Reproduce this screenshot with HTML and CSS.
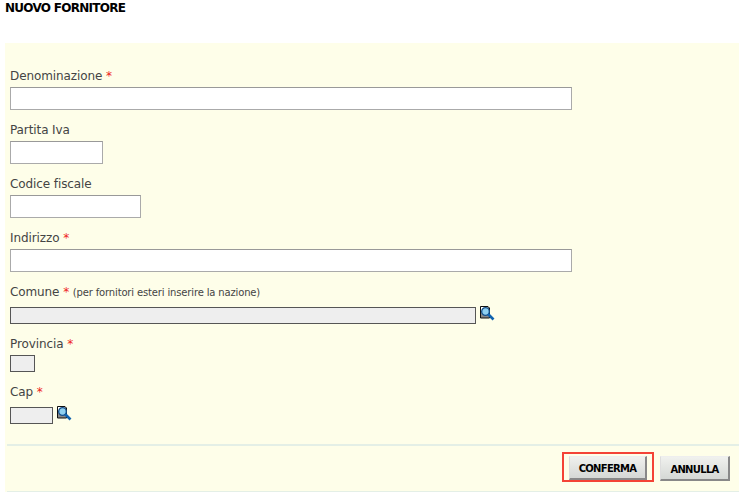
FILE: index.html
```html
<!DOCTYPE html>
<html lang="en">
<head>
    <meta charset="UTF-8">
    <title>Nuovo fornitore</title>
    <link rel="stylesheet" href="styles.css">
</head>
<body>
    <h1 class="title">NUOVO FORNITORE</h1>

    <form class="panel">
        <div class="fields">
            <div class="field">
                <label>Denominazione <span class="req">*</span></label>
                <input type="text" class="w-xl">
            </div>
            <div class="field">
                <label>Partita Iva</label>
                <input type="text" class="w-s">
            </div>
            <div class="field">
                <label>Codice fiscale</label>
                <input type="text" class="w-m">
            </div>
            <div class="field">
                <label>Indirizzo <span class="req">*</span></label>
                <input type="text" class="w-xl">
            </div>
            <div class="field">
                <label>Comune <span class="req">*</span> <small>(per fornitori esteri inserire la nazione)</small></label>
                <div class="lookup">
                    <input type="text" class="locked w-l" readonly>
                    <svg class="lens" width="16" height="15" viewBox="0 0 16 15">
                        <path d="M1.5 .5H9L10.5 2V12H1.5Z" fill="#888" stroke="#111"/>
                        <path d="M2 1H8.500V5H2Z" fill="#fff"/>
                        <circle cx="6.500" cy="5.500" r="3.800" fill="#8fd0f0" stroke="#14508c" stroke-width="1.300"/>
                        <path d="M9 8L14.500 13.500" stroke="#0f62ae" stroke-width="2.600"/>
                    </svg>
                </div>
            </div>
            <div class="field">
                <label>Provincia <span class="req">*</span></label>
                <input type="text" class="locked w-xs" readonly>
            </div>
            <div class="field">
                <label>Cap <span class="req">*</span></label>
                <div class="lookup">
                    <input type="text" class="locked w-cap" readonly>
                    <svg class="lens" width="16" height="15" viewBox="0 0 16 15">
                        <path d="M1.5 .5H9L10.5 2V12H1.5Z" fill="#888" stroke="#111"/>
                        <path d="M2 1H8.500V5H2Z" fill="#fff"/>
                        <circle cx="6.500" cy="5.500" r="3.800" fill="#8fd0f0" stroke="#14508c" stroke-width="1.300"/>
                        <path d="M9 8L14.500 13.500" stroke="#0f62ae" stroke-width="2.600"/>
                    </svg>
                </div>
            </div>
        </div>

        <div class="actions">
            <span class="focus-ring"><button type="button" class="btn btn-ok">CONFERMA</button></span>
            <button type="button" class="btn btn-cancel">ANNULLA</button>
        </div>
    </form>
</body>
</html>
```

FILE: styles.css
```css
/* General Styles */
body {
    font-family: 'DejaVu Sans', Verdana, sans-serif;
    font-size: 12px;
    color: #444;
    background: #fff;
    margin: 0;
    height: 492px;
    overflow: hidden;
}

.title {
    font-size: 12px;
    line-height: 16px;
    font-weight: bold;
    color: #000;
    margin: 0;
    padding: 0 5px;
    height: 43px;
    letter-spacing: -0.72px;
}

/* Form panel */
.panel {
    background: #fefee9;
    margin-left: 5px;
    height: 449px;
}

.fields {
    padding: 22px 5px 0;
    height: 401px;
    box-sizing: border-box;
}

.field {
    margin-bottom: 9px;
}

.field label {
    display: block;
    height: 22px;
    line-height: 22px;
    letter-spacing: -0.1px;
}

.field small {
    font-size: 10px;
    line-height: 1;
    letter-spacing: -0.15px;
}

.req {
    color: #e22;
}

input {
    display: block;
    box-sizing: border-box;
    height: 23px;
    margin: 0;
    padding: 2px;
    background: #fff;
    border: 1px solid #aaa;
    border-top-color: #999;
    border-radius: 0;
}

input.locked {
    background: #eee;
    border-color: #555;
    height: 17px;
}

.w-xl { width: 562px; }
.w-l { width: 466px; }
.w-m { width: 131px; }
.w-s { width: 93px; }
.w-xs { width: 25px; }
.w-cap { width: 43px; }

.lookup {
    display: flex;
    align-items: flex-start;
    gap: 3px;
    margin-top: 4px;
}

.lens {
    margin-top: -1px;
}

/* Buttons */
.actions {
    display: flex;
    justify-content: flex-end;
    align-items: flex-start;
    gap: 6px;
    height: 48px;
    margin-left: 2px;
    padding: 6px 9px 0 0;
    border-top: 2px solid #e4efe6;
    border-bottom: 1px solid #e4efe6;
    box-sizing: border-box;
}

.focus-ring {
    display: flex;
    padding: 2px 5px 0;
    border: 2px solid #f44336;
}

.btn {
    height: 24px;
    padding: 2px 0 0;
    font-family: inherit;
    font-size: 10px;
    font-weight: bold;
    letter-spacing: -0.7px;
    color: #000;
    background: linear-gradient(#f0f1ee, #d5d8d5);
    border: 0;
    border-right: 2px solid #888;
    border-bottom: 2px solid #888;
    border-left: 1px solid #ddd;
    border-top: 1px solid #eee;
}

.btn-ok {
    width: 78px;
}

.btn-cancel {
    width: 70px;
    height: 25px;
    margin-top: 4px;
}
```
